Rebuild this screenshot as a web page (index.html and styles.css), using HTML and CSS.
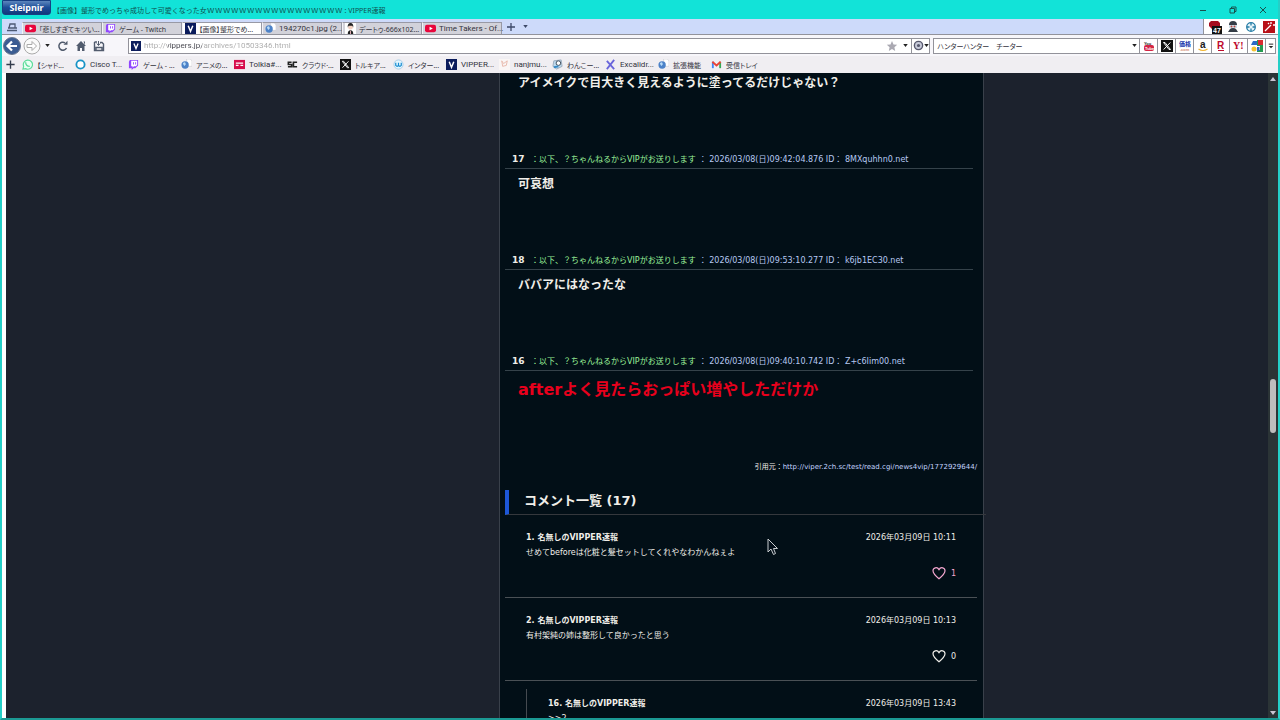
FILE: index.html
```
<!DOCTYPE html>
<html lang="ja">
<head>
    <meta charset="UTF-8">
    <meta name="viewport" content="width=device-width, initial-scale=1.0">
    <title>VIPPER速報</title>
    <link rel="stylesheet" href="styles.css">
</head>
<body>
    <svg class="defs" aria-hidden="true">
        <symbol id="yt" viewBox="0 0 12 12"><rect x="0" y="2" width="12" height="8" rx="2" fill="#e8063c"/><path d="M5 4l3.500 2L5 8z" fill="#fff"/></symbol>
        <symbol id="twitch" viewBox="0 0 12 12"><path d="M2 1h9v6L8 10H6l-2 2v-2H1V3z" fill="#9146ff"/><path d="M3.500 2H10v4.500L8.500 8H6.500L5 9.300V8H3.500z" fill="#fff"/><path d="M6 3.500v2.500M8.300 3.500v2.500" stroke="#9146ff"/></symbol>
        <symbol id="vip" viewBox="0 0 12 12"><rect width="12" height="12" fill="#0b1c5c"/><path d="M3.500 3L6 9l2.500-6" fill="none" stroke="#fff" stroke-width="1.600"/></symbol>
        <symbol id="globe" viewBox="0 0 12 12"><path d="M6 0h4l2 2v6H7z" fill="#fff" stroke="#c4c4cc" stroke-width=".6"/><circle cx="4.500" cy="6.500" r="4" fill="#4c82c8"/><path d="M2 5Q4 2.500 5 4.500T3.500 7.500z" fill="#b8dbf7"/></symbol>
        <symbol id="x" viewBox="0 0 12 12"><rect width="12" height="12" fill="#111"/><path d="M2.500 2.500h1.500l5.500 7H8zM9.300 2.500L2.700 9.500" fill="none" stroke="#fff"/></symbol>
        <symbol id="person" viewBox="0 0 12 12"><rect width="12" height="12" fill="#fff"/><path d="M3 12q0-4 3-4t3 4z" fill="#222"/><circle cx="6" cy="4.500" r="2.600" fill="#f1cfc0"/><path d="M3 5q-.5-5 3-5t3 5L8 3H4z" fill="#222"/><path d="M6 8.500V12" stroke="#e8b0b8"/></symbol>
        <symbol id="heart" viewBox="0 0 14 14"><path d="M7 12.800C3 9.500 1 7.500 1 4.800 1 1.500 5.300.500 7 3.600 8.700.500 13 1.500 13 4.800 13 7.500 11 9.500 7 12.800z" fill="none" stroke="currentColor" stroke-width="1.200"/></symbol>
        <symbol id="down" viewBox="0 0 6 4"><path d="M0 0h6L3 4z" fill="currentColor"/></symbol>
    </svg>

    <div class="window">
        <header class="titlebar">
            <button class="brand">Sleipnir</button>
            <span class="title">【画像】整形でめっちゃ成功して可愛くなった女<span class="wide">ｗｗｗｗｗｗｗｗｗｗｗｗｗｗｗｗｗ</span> : VIPPER速報</span>
            <div class="controls">
                <button aria-label="最小化"><svg viewBox="0 0 8 8"><path d="M1 4.500h6" stroke="#17524f"/></svg></button>
                <button aria-label="元に戻す"><svg viewBox="0 0 8 8"><path d="M1 2.500h4.500V7H1zM2.500 2.500V1H7v4.500H5.500" fill="none" stroke="#17524f"/></svg></button>
                <button aria-label="閉じる"><svg viewBox="0 0 8 8"><path d="M1 1l6 6M7 1L1 7" stroke="#17524f"/></svg></button>
            </div>
        </header>

        <div class="tabbar">
            <button class="panel-btn" aria-label="パネル"><svg viewBox="0 0 12 12"><path d="M3 7l1-4h5v4M1 9.500h10M2 7h9" fill="none" stroke="#4c5974" stroke-width="1.300"/></svg></button>
            <nav class="tabs">
                <button class="tab"><svg><use href="#yt"/></svg><span>「悲しすぎてキツい...</span></button>
                <button class="tab"><svg><use href="#twitch"/></svg><span>ゲーム - Twitch</span></button>
                <button class="tab active"><svg><use href="#vip"/></svg><span>【画像】整形でめ...</span></button>
                <button class="tab"><svg><use href="#globe"/></svg><span class="latin">194270c1.jpg (2...</span></button>
                <button class="tab"><svg><use href="#person"/></svg><span>デートゥ-666x102...</span></button>
                <button class="tab"><svg><use href="#yt"/></svg><span class="latin">Time Takers - Of...</span></button>
            </nav>
            <button class="new-tab" aria-label="新しいタブ"><svg viewBox="0 0 8 8"><path d="M4 0v8M0 4h8" stroke="#3d4968" stroke-width="1.300"/></svg></button>
            <button class="tab-menu" aria-label="タブ一覧"><svg><use href="#down"/></svg></button>
            <div class="extensions">
                <button aria-label="ブロッカー"><svg viewBox="0 0 14 14"><path d="M3 1h7l2 2v4l-3 2H4L1 6V3z" fill="#a50d20"/><rect x="4" y="6" width="10" height="8" fill="#111"/><text x="5" y="13" class="badge">47</text></svg></button>
                <button aria-label="プロフィール"><svg viewBox="0 0 14 14"><circle cx="7" cy="5" r="4" fill="#333b45"/><path d="M3 5h8v3H3z" fill="#cfe0ea"/><path d="M2 12l2-3h6l2 3z" fill="#333b45"/><circle cx="5.500" cy="6.500" r="1" fill="#b84640"/><circle cx="8.500" cy="6.500" r="1" fill="#b84640"/></svg></button>
                <button aria-label="ターゲット"><svg viewBox="0 0 14 14"><circle cx="7" cy="7" r="4.300" fill="#e7f5fa" stroke="#267da6" stroke-width="1.300"/><path d="M7 3v2.500M7 8.500V11M3 7h2.500M8.500 7H11" stroke="#267da6" stroke-width="1.300"/></svg></button>
                <button aria-label="マジック"><svg viewBox="0 0 14 14"><rect x="1" y="1" width="12" height="12" fill="#b80f17"/><path d="M3 11l6-6M9 2v2M11 5h2M6 3l1 1" stroke="#fff" stroke-width="1.300"/></svg></button>
            </div>
        </div>

        <div class="toolbar">
            <div class="nav-buttons">
                <button aria-label="戻る" class="round"><svg viewBox="0 0 18 18"><circle cx="9" cy="9" r="8.500" fill="#3b5c92" stroke="#69778f"/><path d="M14 9H5M9 4.500L4.500 9 9 13.500" fill="none" stroke="#fff" stroke-width="2.200"/></svg></button>
                <button aria-label="進む" class="round"><svg viewBox="0 0 18 18"><circle cx="9" cy="9" r="8" fill="#fafafa" stroke="#aaa"/><path d="M4 7.500h5V4.500L13.500 9 9 13.500v-3H4z" fill="#fff" stroke="#aaa"/></svg></button>
                <button aria-label="履歴"><svg class="caret"><use href="#down"/></svg></button>
                <button aria-label="再読み込み"><svg viewBox="0 0 12 12"><path d="M9.500 8A4 4 0 1 1 8 2.800" fill="none" stroke="#515b6d" stroke-width="1.500"/><path d="M6.500 4.700h4V.8z" fill="#515b6d"/></svg></button>
                <button aria-label="ホーム"><svg viewBox="0 0 12 12"><path d="M6 1l5 5H9.500v5h-2.500V8H5v3H2.500V6H1zM8.500 1.500h1.500V5z" fill="#515b6d"/></svg></button>
                <button aria-label="保存"><svg viewBox="0 0 12 12"><path d="M1.500 2v8.500h9V4L9 2.500H7M1.500 2H4M3 10V7.500h6V10" fill="none" stroke="#515b6d" stroke-width="1.400"/><path d="M5.500 1v4M3.800 3.500l1.700 2 1.700-2" fill="none" stroke="#515b6d"/></svg></button>
            </div>
            <div class="address">
                <svg class="favicon"><use href="#vip"/></svg>
                <input type="text" class="url" aria-label="アドレス" value="http://vippers.jp/archives/10503346.html">
                <button aria-label="ブックマーク"><svg viewBox="0 0 12 12"><path d="M6 1l1.500 3.500 3.700.3-2.800 2.500.8 3.700L6 9l-3.200 2 .8-3.700L.8 4.800l3.700-.3z" fill="#aaa9b2"/></svg></button>
                <button aria-label="アドレス履歴"><svg class="caret"><use href="#down"/></svg></button>
                <button class="engine" aria-label="エンジン"><svg viewBox="0 0 12 12"><circle cx="6" cy="6" r="4.500" fill="#c7cad9" stroke="#57586d" stroke-width="1.500"/><circle cx="6" cy="6" r="1.700" fill="#57586d"/></svg><svg class="caret"><use href="#down"/></svg></button>
            </div>
            <div class="search">
                <input type="text" aria-label="検索" value="ハンターハンター　チーター">
                <button aria-label="検索履歴"><svg class="caret"><use href="#down"/></svg></button>
            </div>
            <div class="engines">
                <button aria-label="YouTube"><svg viewBox="0 0 12 12"><text x="1" y="5" class="mini">You</text><rect x="1" y="5" width="10" height="6" rx="2" fill="#d42443"/><text x="2" y="10" class="mini white">Tube</text></svg></button>
                <button aria-label="X"><svg><use href="#x"/></svg></button>
                <button aria-label="価格.com"><svg viewBox="0 0 12 12"><text x="0" y="6" class="kakaku">価格</text><text x="1" y="11" class="mini orange">.com</text></svg></button>
                <button aria-label="Amazon"><svg viewBox="0 0 12 12"><text x="3" y="8" class="letter">a</text><path d="M1.500 9q4.500 3 9 0" fill="none" stroke="#f2b430" stroke-width="1.200"/></svg></button>
                <button aria-label="楽天"><svg viewBox="0 0 12 12"><text x="2" y="9" class="letter red">R</text><path d="M3 10.500h6" stroke="#be0a2d"/></svg></button>
                <button aria-label="Yahoo"><svg viewBox="0 0 12 12"><text x="0" y="9" class="letter yahoo">Y!</text></svg></button>
                <button aria-label="マップ"><svg viewBox="0 0 12 12"><path d="M6 0h6v12H6z" fill="#239b50"/><path d="M7 0h5v5H7z" fill="#d92c30"/><path d="M2 1h4v4H0z" fill="#2b6ac7"/><path d="M5 6h4v4H5z" fill="#fff"/><path d="M6 7h2.500v4H6z" fill="#2b6ac7"/><circle cx="3" cy="9" r="2.500" fill="#f3c333"/></svg></button>
                <button class="more" aria-label="その他"><svg viewBox="0 0 8 8"><path d="M1 1.500h6" stroke="#222" stroke-width="1.300"/><path d="M1 4h6L4 7z" fill="#222"/></svg></button>
            </div>
        </div>

        <nav class="bookmarks">
            <button aria-label="追加"><svg viewBox="0 0 12 12"><path d="M6 1.500v9M1.500 6h9" stroke="#333c4c" stroke-width="1.500"/></svg></button>
            <a href="#"><svg viewBox="0 0 12 12"><path d="M1 11l.8-3A5 5 0 1 1 4 10.500z" fill="#e9fff3" stroke="#5ddc9b" stroke-width="1.300"/><path d="M4 3.500q0 4.500 4.500 4.500" fill="none" stroke="#5ddc9b" stroke-width="1.500"/></svg>【シャド...</a>
            <a href="#" class="latin"><svg viewBox="0 0 12 12"><circle cx="6" cy="6" r="4.500" fill="#fff" stroke="#1793c6" stroke-width="2"/></svg>Cisco T...</a>
            <a href="#"><svg><use href="#twitch"/></svg>ゲーム - ...</a>
            <a href="#"><svg><use href="#globe"/></svg>アニメの...</a>
            <a href="#" class="latin"><svg viewBox="0 0 12 12"><rect y="1" width="12" height="10" fill="#d60d4c"/><path d="M2 4.500h8M2 7h3M7 7h3" stroke="#fff" stroke-width="1.500"/></svg>Tolkia#...</a>
            <a href="#"><svg viewBox="0 0 12 12"><path d="M5 3.500H1.500v2.500H5v2.500H1M11 3.500H7v5h4" fill="none" stroke="#222" stroke-width="1.800"/></svg>クラウド·...</a>
            <a href="#"><svg><use href="#x"/></svg>トルキア...</a>
            <a href="#"><svg viewBox="0 0 12 12"><circle cx="6" cy="6" r="5" fill="#e3f6ff" stroke="#a6cde6"/><path d="M3 4v3q1.500 2 3 0V4v3q1.500 2 3 0V4" fill="none" stroke="#168bd0" stroke-width="1.300"/></svg>インター...</a>
            <a href="#" class="latin"><svg><use href="#vip"/></svg>VIPPER...</a>
            <a href="#" class="latin"><svg viewBox="0 0 12 12"><rect width="12" height="12" fill="#faf6f5"/><path d="M3 2l2 3 4-3-1 5-4 1z" fill="none" stroke="#e7b7a8"/></svg>nanjmu...</a>
            <a href="#"><svg viewBox="0 0 12 12"><path d="M2 2l8-1 1 7-6 3-4-3z" fill="#bed9ed" stroke="#9ab"/><circle cx="7" cy="4.500" r="2.500" fill="#fff" stroke="#345"/><path d="M2 9l5-1" stroke="#368ac7" stroke-width="2"/></svg>わんこー...</a>
            <a href="#" class="latin"><svg viewBox="0 0 12 12"><path d="M2 2l8 9M10 1L2 11" stroke="#6965db" stroke-width="2"/></svg>Excalidr...</a>
            <a href="#"><svg><use href="#globe"/></svg>拡張機能</a>
            <a href="#"><svg viewBox="0 0 12 12"><path d="M2 10V3" stroke="#4285f4" stroke-width="2"/><path d="M10 10V3" stroke="#34a853" stroke-width="2"/><path d="M1.500 3L6 7l4.500-4" fill="none" stroke="#ea4335" stroke-width="2"/></svg>受信トレイ</a>
        </nav>

        <div class="viewport">
            <div class="page">
                <main class="column">
                    <article class="post">
                        <p>アイメイクで目大きく見えるように塗ってるだけじゃない？</p>
                    </article>
                    <article class="post">
                        <div class="post-head"><b>17</b><span class="name">：以下、？ちゃんねるからVIPがお送りします</span><span class="date">： 2026/03/08(日)09:42:04.876 ID： 8MXquhhn0.net</span></div>
                        <p>可哀想</p>
                    </article>
                    <article class="post">
                        <div class="post-head"><b>18</b><span class="name">：以下、？ちゃんねるからVIPがお送りします</span><span class="date">： 2026/03/08(日)09:53:10.277 ID： k6jb1EC30.net</span></div>
                        <p>ババアにはなったな</p>
                    </article>
                    <article class="post">
                        <div class="post-head"><b>16</b><span class="name">：以下、？ちゃんねるからVIPがお送りします</span><span class="date">： 2026/03/08(日)09:40:10.742 ID： Z+c6Iim00.net</span></div>
                        <p class="big">afterよく見たらおっぱい増やしただけか</p>
                    </article>
                    <div class="source">引用元：<a href="#">http://viper.2ch.sc/test/read.cgi/news4vip/1772929644/</a></div>

                    <h2>コメント一覧 (17)</h2>
                    <section class="comment">
                        <div class="comment-head"><b>1. 名無しのVIPPER速報</b><span>2026年03月09日 10:11</span></div>
                        <div class="text">せめてbeforeは化粧と髪セットしてくれやなわかんねぇよ</div>
                        <button class="like liked"><svg><use href="#heart"/></svg>1</button>
                    </section>
                    <section class="comment">
                        <div class="comment-head"><b>2. 名無しのVIPPER速報</b><span>2026年03月09日 10:13</span></div>
                        <div class="text">有村架純の姉は整形して良かったと思う</div>
                        <button class="like"><svg><use href="#heart"/></svg>0</button>
                    </section>
                    <section class="reply">
                        <div class="comment-head"><b>16. 名無しのVIPPER速報</b><span>2026年03月09日 13:43</span></div>
                        <div class="text">&gt;&gt;2</div>
                    </section>
                </main>
            </div>
            <div class="scrollbar">
                <svg viewBox="0 0 6 4"><path d="M0 4h6L3 0z" fill="#c9c5d2"/></svg>
                <div class="thumb"></div>
                <svg viewBox="0 0 6 4"><path d="M0 0h6L3 4z" fill="#c9c5d2"/></svg>
            </div>
        </div>
    </div>

    <svg class="cursor" viewBox="0 0 12 18"><path d="M1 1v13l3-3 2.500 5.500 2-1L6.500 10.500H10.500z" fill="#05101a" stroke="#c8cdd0"/></svg>
</body>
</html>
```
FILE: styles.css
```
* {
    box-sizing: border-box;
}

body {
    margin: 0;
    height: 100vh;
    overflow: hidden;
    font-family: "DejaVu Sans", "Noto Sans CJK JP", sans-serif;
    font-size: 8px;
    color: #f0eee9;
}

button, input {
    padding: 0;
    border: none;
    background: none;
    font: inherit;
    color: inherit;
}

button {
    display: flex;
    align-items: center;
    justify-content: center;
    cursor: pointer;
}

svg {
    width: 12px;
    height: 12px;
    flex: none;
}

.defs {
    display: none;
}

.window {
    display: flex;
    flex-direction: column;
    height: 100%;
    border: 2px solid #24cfc7;
    border-top: none;
    border-bottom-color: #1b9993;
    background: #fff;
}

.titlebar, .tabbar, .toolbar, .bookmarks {
    flex: none;
    display: flex;
    align-items: center;
    font-family: "Noto Sans", "Noto Sans CJK JP", sans-serif;
    font-size: 7px;
    color: #33333d;
}

/* Title bar */
.titlebar {
    height: 19px;
    background: #12e3d8;
    color: #10504f;
}

.brand {
    align-self: flex-start;
    width: 49px;
    height: 15px;
    border: 1px solid #173f83;
    border-radius: 0 0 3px 3px;
    background: linear-gradient(#5c86bd, #1d4d98 50%, #11397c);
    color: #fff;
    font-size: 9px;
    font-weight: bold;
}

.title {
    margin-left: 2px;
}

.wide {
    font-size: 8px;
}

.controls {
    display: flex;
    gap: 22px;
    margin-left: auto;
    margin-right: 11px;
}

.controls svg {
    width: 8px;
    height: 8px;
}

/* Tabs */
.tabbar {
    height: 16px;
    background: #cddafa;
    border-bottom: 1px solid #92939c;
}

.panel-btn {
    width: 20px;
}

.tabs {
    display: flex;
    align-self: flex-end;
}

.tab {
    width: 80px;
    height: 12px;
    padding: 0 2px;
    gap: 3px;
    justify-content: flex-start;
    white-space: nowrap;
    background: #d2d2da;
    border: 1px solid #9899a5;
    border-bottom: none;
    border-left-color: #f3f3f8;
}

.tab.active {
    background: #fff;
}

.tab svg {
    width: 11px;
    height: 11px;
}

.tab span, .bookmarks a {
    font-feature-settings: "palt";
}

.latin {
    font-family: Roboto, sans-serif;
    font-size: 8px;
}

.new-tab svg {
    width: 8px;
    height: 8px;
}

.new-tab {
    margin-left: 5px;
}

.tab-menu {
    margin-left: 8px;
    color: #3d4968;
}

.tab-menu svg {
    width: 5px;
    height: 3px;
}

.extensions {
    display: flex;
    gap: 4px;
    align-self: stretch;
    margin-left: auto;
    padding: 0 2px 0 4px;
    background: #fff;
    border-left: 1px solid #92939c;
}

.extensions svg {
    width: 14px;
    height: 14px;
}

.badge {
    font: bold 7px "Liberation Sans", sans-serif;
    fill: #fff;
}

/* Address and search */
.toolbar {
    height: 21px;
    padding-left: 1px;
    gap: 3px;
    background: #f7f6fa;
}

.nav-buttons {
    display: flex;
    align-items: center;
    gap: 6px;
    width: 122px;
}

.nav-buttons .round {
    margin-right: -4px;
}

.round svg {
    width: 18px;
    height: 18px;
}

.nav-buttons button:nth-child(3) {
    margin-left: 2px;
    margin-right: 1px;
}

.caret {
    width: 5px;
    height: 3px;
    color: #222;
}

.address, .search {
    display: flex;
    align-items: center;
    height: 16px;
    background: #fff;
    border: 1px solid #92929a;
}

.address {
    flex: 4;
    padding-left: 2px;
    gap: 3px;
}

.url {
    flex: 1;
    font-family: Roboto, sans-serif;
    font-size: 8px;
    background: linear-gradient(to right, #aaa 24px, #44444c 24px, #44444c 58px, #aaa 58px);
    background-clip: text;
    -webkit-background-clip: text;
    color: transparent;
}

.favicon {
    width: 10px;
    height: 10px;
}

.address button {
    margin-left: 2px;
}

.address .engine {
    height: 14px;
    width: 18px;
    margin-left: 0;
    border-left: 1px solid #92929a;
}

.engine svg:first-child {
    width: 11px;
    height: 11px;
}

.search {
    flex: 1;
    padding: 0 2px 0 3px;
    border-right: none;
}

.search input {
    flex: 1;
    min-width: 0;
    font-feature-settings: "palt";
}

.engines {
    display: flex;
    height: 16px;
    margin-left: -3px;
    margin-right: 2px;
    background: #fff;
    border: 1px solid #92929a;
}

.engines button {
    width: 18px;
    border-right: 1px solid #92929a;
}

.engines .more {
    width: 9px;
    border-right: none;
}

.more svg {
    width: 6px;
    height: 6px;
}

.mini {
    font: bold 4px "Liberation Sans", sans-serif;
    fill: #222;
}

.white {
    fill: #fff;
}

.orange {
    fill: #d28c72;
}

.kakaku {
    font: bold 6px "Noto Sans CJK JP", sans-serif;
    fill: #1b3aac;
}

.letter {
    font: bold 10px "Liberation Sans", sans-serif;
    fill: #222;
}

.red, .yahoo {
    fill: #be0a2d;
}

.yahoo {
    font-family: "Liberation Serif", serif;
}

/* Bookmarks */
.bookmarks {
    height: 17px;
    padding-left: 2px;
    background: #f0eef2;
}

.bookmarks button {
    width: 12px;
    margin-right: 6px;
}

.bookmarks a {
    display: flex;
    align-items: center;
    gap: 4px;
    width: 53px;
    flex: none;
    color: inherit;
    text-decoration: none;
    white-space: nowrap;
}

.bookmarks svg {
    width: 11px;
    height: 11px;
}

/* Page */
.viewport {
    flex: 1;
    min-height: 0;
    display: flex;
    margin-left: 4px;
}

.page {
    flex: 1;
    display: grid;
    grid-template-columns: 493fr 485px 284fr;
    overflow: hidden;
    background: #1c222d;
}

.column {
    grid-column: 2;
    padding: 0 6px 0 5px;
    background: #020f17;
    border-left: 1px solid #39404a;
    border-right: 1px solid #39404a;
}

.post {
    margin-right: 4px;
}

.post-head {
    display: flex;
    align-items: center;
    height: 18px;
    padding: 0 0 2px 7px;
    border-bottom: 1px solid #35424a;
}

.post-head b {
    width: 19px;
    font-size: 9px;
}

.name {
    color: #9cf39a;
}

.date {
    margin-left: 3px;
    color: #b7c9f2;
}

.post p {
    min-height: 83px;
    margin: 0;
    padding: 6px 0 0 13px;
    font-size: 12px;
    font-weight: bold;
    line-height: 18px;
}

.post:first-child p {
    min-height: 78px;
    padding-top: 1px;
}

.post .big {
    min-height: 90px;
    font-size: 16px;
    line-height: 26px;
    color: #e8001c;
}

.source {
    line-height: 12px;
    font-size: 7px;
    text-align: right;
}

.source a {
    color: #c3d4ff;
    text-decoration: none;
}

h2 {
    height: 25px;
    margin: 17px -9px 0 0;
    padding-left: 15px;
    border-left: 4px solid #1d57d8;
    border-bottom: 1px solid #35383d;
    font-size: 13px;
    line-height: 22px;
}

.comment {
    height: 83px;
    padding: 15px 21px 0;
    border-bottom: 1px solid #4a5055;
}

.comment-head {
    display: flex;
    justify-content: space-between;
    line-height: 15px;
}

.text {
    line-height: 15px;
}

.like {
    gap: 5px;
    height: 14px;
    margin: 6px 0 0 auto;
}

.like svg {
    width: 14px;
    height: 14px;
}

.liked {
    color: #f3a6cf;
}

.reply {
    margin: 8px 0 0 21px;
    padding: 7px 21px 0;
    border-left: 1px solid #454a50;
}

.scrollbar {
    width: 10px;
    display: grid;
    grid-template-rows: 11px 295fr 54px 274fr 11px;
    justify-items: center;
    align-items: center;
    background: #2b3436;
}

.scrollbar svg {
    width: 6px;
    height: 4px;
}

.thumb {
    grid-row: 3;
    width: 6px;
    height: 54px;
    border-radius: 3px;
    background: #bdbdbd;
}

.scrollbar svg:last-child {
    grid-row: 5;
}

.cursor {
    position: absolute;
    left: 767px;
    top: 538px;
    width: 12px;
    height: 18px;
}
```
